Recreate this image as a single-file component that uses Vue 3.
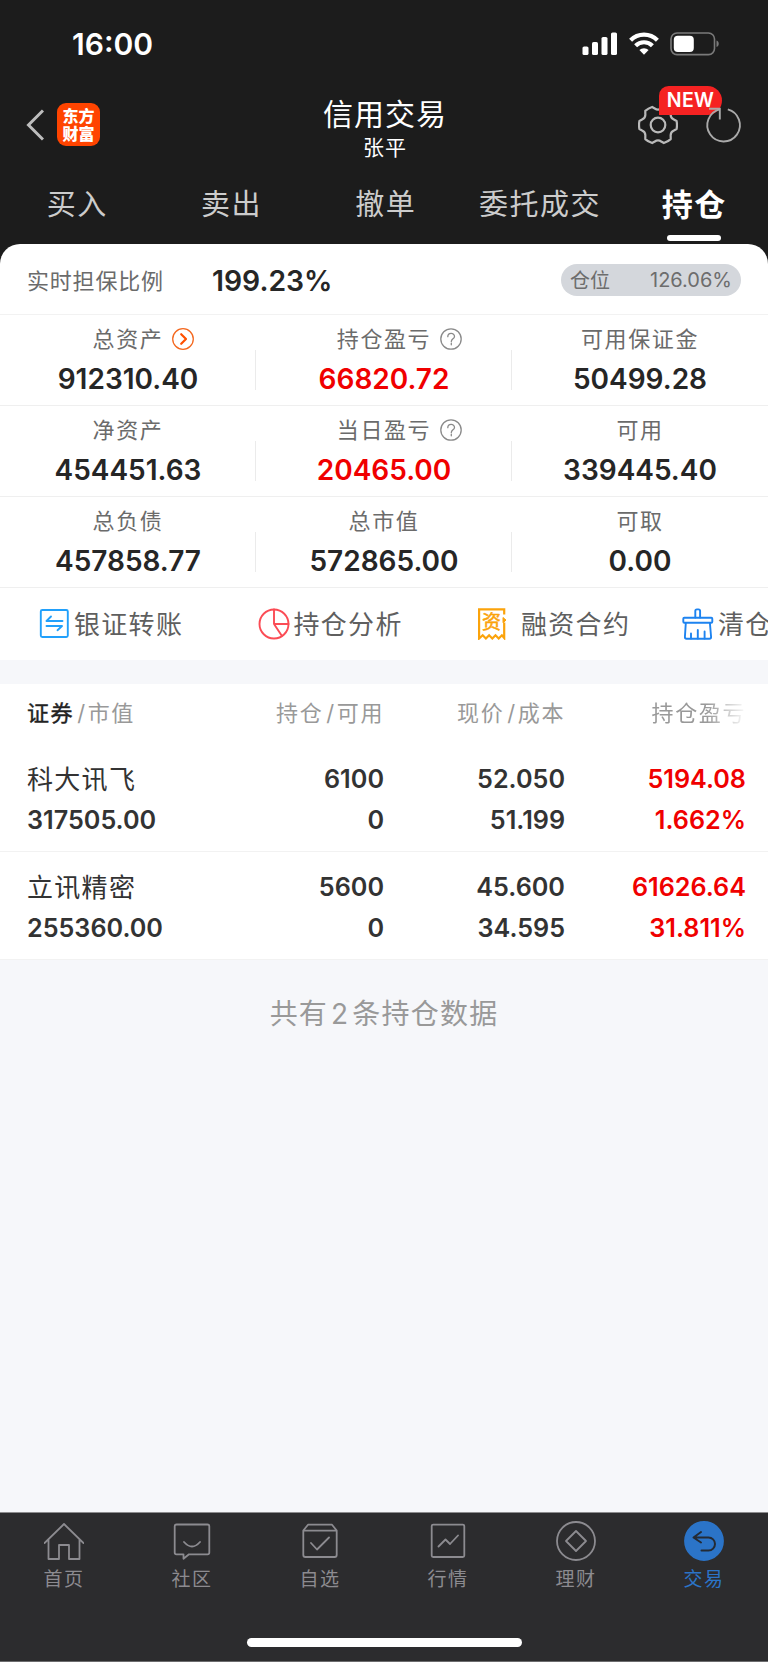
<template>
    <div class="page">
        <header class="header">
            <div class="status-bar">
                <span class="clock">16:00</span>
                <div class="status-icons">
                    <svg class="signal" viewBox="0 0 36 24">
                        <rect x="0.5" y="14.5" width="6" height="8.5" rx="1.6" />
                        <rect x="10" y="10" width="6" height="13" rx="1.6" />
                        <rect x="19.5" y="5" width="6" height="18" rx="1.6" />
                        <rect x="29" y="0.5" width="6" height="22.5" rx="1.6" />
                    </svg>
                    <svg class="wifi" viewBox="0 0 32 24">
                        <path d="M2.6 8.2a19 19 0 0 1 26.8 0" />
                        <path d="M7.6 13.7a12 12 0 0 1 16.8 0" />
                        <path class="dot" d="M16 22.8l-4.6-4.7a6.5 6.5 0 0 1 9.2 0z" />
                    </svg>
                    <svg class="battery" viewBox="0 0 50 24">
                        <rect class="shell" x="1" y="1" width="43.5" height="21.6" rx="6" />
                        <rect x="3.8" y="3.7" width="20" height="16.3" rx="4" fill="#fff" />
                        <path class="cap" d="M46.500 8.500c3 1 3 5.600 0 6.600z" />
                    </svg>
                </div>
            </div>

            <div class="nav-bar">
                <div class="nav-left">
                    <svg class="back" viewBox="0 0 18 34">
                        <path d="M17 2.500L2.500 17l14.500 14.500" />
                    </svg>
                    <div class="logo"><span>东方</span><span>财富</span></div>
                </div>
                <div class="nav-title">
                    <h1>信用交易</h1>
                    <p>张平</p>
                </div>
                <div class="nav-right">
                    <div class="settings">
                        <svg viewBox="-20 -20 40 40">
                            <path :d="gearPath" />
                            <circle r="7.300" />
                        </svg>
                        <span class="new-badge">NEW</span>
                    </div>
                    <svg class="refresh" viewBox="-20 -20 40 40">
                        <path d="M3.800 -15.600A16.300 16.300 0 1 1 -4.200 -15.700" />
                        <path d="M-15 -16.300H-4.200V-5.500" />
                    </svg>
                </div>
            </div>

            <nav class="tabs">
                <div
                    v-for="tab in tabs"
                    :key="tab"
                    class="tab"
                    :class="{ active: tab === activeTab }"
                    @click="activeTab = tab"
                >
                    <span>{{ tab }}</span>
                </div>
            </nav>
        </header>

        <section class="panel">
            <div class="ratio">
                <span class="ratio-label">实时担保比例</span>
                <span class="ratio-value">199.23%</span>
                <div class="position-pill">
                    <span class="pill-name">仓位</span>
                    <span>126.06%</span>
                </div>
            </div>

            <div class="metrics">
                <div v-for="m in metrics" :key="m.label" class="metric">
                    <div class="metric-label">
                        {{ m.label }}
                        <svg v-if="m.icon === 'arrow'" class="mark orange" viewBox="0 0 22 22">
                            <circle cx="11" cy="11" r="10.300" />
                            <path d="M9.200 6.200l4.800 4.800-4.800 4.800" />
                        </svg>
                        <svg v-if="m.icon === 'help'" class="mark" viewBox="0 0 22 22">
                            <circle cx="11" cy="11" r="10.200" />
                            <path d="M7.800 8.700c0-4.400 6.700-4.200 6.700-.3 0 2.400-3.200 2.500-3.200 5.200M11.300 15.200v1.600" />
                        </svg>
                    </div>
                    <div class="metric-value" :class="{ up: m.up }">{{ m.value }}</div>
                </div>
            </div>

            <div class="actions">
                <div class="action">
                    <svg viewBox="0 0 32 32" stroke="#21a0fb">
                        <rect x="2.800" y="2" width="27" height="27" rx="1.500" />
                        <path d="M24.500 13H8.500l4.500-4.500M8.500 18H24l-4.500 4.200" />
                    </svg>
                    <span>银证转账</span>
                </div>
                <div class="action">
                    <svg viewBox="0 0 32 32" stroke="#fb4c55">
                        <circle cx="16" cy="16" r="14.500" />
                        <path d="M16 1.500V16h14.500M16 16l7.800 11.700" />
                    </svg>
                    <span>持仓分析</span>
                </div>
                <div class="action contract">
                    <svg viewBox="0 0 32 32" stroke="#fba30b">
                        <path d="M28.200 6.500V1.300H3.100V30.500l3.600-3.200 3.200 3.200 3.200-3.200 3.200 3.200 3.200-3.200 3.200 3.200 3.200-3.200 2.300 2.700V14.500" />
                        <path d="M27 9.500l3 2.600-3 2.700z" fill="#fba30b" stroke-width="1" />
                        <text x="15.500" y="20.500" text-anchor="middle">资</text>
                    </svg>
                    <span>融资合约</span>
                </div>
                <div class="action">
                    <svg viewBox="0 0 32 32" stroke="#1d83f0">
                        <path d="M13.300 9.500V3q0-1.600 1.600-1.600h1.600q1.600 0 1.600 1.600v6.500" />
                        <rect x="1.300" y="9.800" width="29" height="5" rx="1" />
                        <path d="M3.800 15L2.900 29q0 1.700 1.600 1.700h23q1.600 0 1.600-1.700L27.900 15" />
                        <path d="M9 30.500v-5M15.800 30.500v-8.500M22.600 30.500v-7" />
                    </svg>
                    <span>清仓</span>
                </div>
            </div>
        </section>

        <section class="holdings">
            <div class="grid-row head">
                <div class="left"><b>证券</b><i>/</i>市值</div>
                <div>持仓<i>/</i>可用</div>
                <div>现价<i>/</i>成本</div>
                <div class="fading">持仓盈亏</div>
            </div>
            <div v-for="h in holdings" :key="h.name" class="grid-row stock">
                <div class="left name">{{ h.name }}</div>
                <div>{{ h.amount }}</div>
                <div>{{ h.price }}</div>
                <div class="up">{{ h.profit }}</div>
                <div class="left">{{ h.marketValue }}</div>
                <div>{{ h.available }}</div>
                <div>{{ h.cost }}</div>
                <div class="up">{{ h.rate }}</div>
            </div>
        </section>

        <p class="summary">共有<span>{{ holdings.length }}</span>条持仓数据</p>

        <footer class="tab-bar">
            <div class="tab-items">
                <div v-for="item in navItems" :key="item.label" class="tab-item" :class="{ current: item.current }">
                    <svg viewBox="-20 -20 40 40">
                        <circle v-if="item.round" r="19" />
                        <path :d="item.path" />
                    </svg>
                    <span>{{ item.label }}</span>
                </div>
            </div>
            <div class="home-indicator"></div>
        </footer>
    </div>
</template>

<script setup>
import { ref } from 'vue'

const tabs = ['买入', '卖出', '撤单', '委托成交', '持仓']
const activeTab = ref('持仓')

const metrics = [
    { label: '总资产', value: '912310.40', icon: 'arrow' },
    { label: '持仓盈亏', value: '66820.72', icon: 'help', up: true },
    { label: '可用保证金', value: '50499.28' },
    { label: '净资产', value: '454451.63' },
    { label: '当日盈亏', value: '20465.00', icon: 'help', up: true },
    { label: '可用', value: '339445.40' },
    { label: '总负债', value: '457858.77' },
    { label: '总市值', value: '572865.00' },
    { label: '可取', value: '0.00' }
]

const holdings = [
    {
        name: '科大讯飞',
        marketValue: '317505.00',
        amount: '6100',
        available: '0',
        price: '52.050',
        cost: '51.199',
        profit: '5194.08',
        rate: '1.662%'
    },
    {
        name: '立讯精密',
        marketValue: '255360.00',
        amount: '5600',
        available: '0',
        price: '45.600',
        cost: '34.595',
        profit: '61626.64',
        rate: '31.811%'
    }
]

const navItems = [
    { label: '首页', path: 'M-19.500 2L0 -17L19.500 2M-15.500 -1.500V18H-5V4H5V18H15.500V-1.500' },
    { label: '社区', path: 'M-15.500 -16.500H15.500Q17.300 -16.500 17.300 -14.700V11.500Q17.300 13.300 15.500 13.300H-3L-8.500 17.800V13.300H-15.500Q-17.300 13.300 -17.300 11.500V-14.700Q-17.300 -16.500 -15.500 -16.500ZM-8 1Q0 10 8 1' },
    { label: '自选', path: 'M-16.700 -10.500L-12 -16.300H12L16.700 -10.500V14Q16.700 16 14.700 16H-14.700Q-16.700 16 -16.700 14ZM-16 -10.300H16M-9 2L-3 8.500L9 -3.500' },
    { label: '行情', path: 'M-14.800 -16.300H14.800Q16.300 -16.300 16.300 -14.800V14.500Q16.300 16 14.800 16H-14.800Q-16.300 16 -16.300 14.500V-14.800Q-16.300 -16.300 -14.800 -16.300ZM-9.500 5.500L-2.500 -1.500L2 3L10 -5.500' },
    { label: '理财', round: true, path: 'M0 -10L10 0L0 10L-10 0Z' },
    { label: '交易', round: true, current: true, path: 'M-3 -9L-10.500 -3.500L-3 1.500M-10 -3.500H4.500A6.500 6.500 0 0 1 4.500 9.500H-2.500' }
]

// six teeth, 60 degrees apart, joined by rounded notches
const polar = (deg, r) => {
    const a = (deg * Math.PI) / 180
    return `${(r * Math.cos(a)).toFixed(2)} ${(r * Math.sin(a)).toFixed(2)}`
}
const gearPath =
    `M${polar(-12, 19)}` +
    [0, 60, 120, 180, 240, 300]
        .map(d => `Q${polar(d, 19.4)} ${polar(d + 12, 19)}L${polar(d + 19, 16.8)}Q${polar(d + 30, 14.2)} ${polar(d + 41, 16.8)}L${polar(d + 48, 19)}`)
        .join('') +
    'Z'
</script>

<style>
body {
    margin: 0;
    background: #f6f7fa;
}
</style>

<style scoped>
.page {
    display: flex;
    flex-direction: column;
    width: 768px;
    height: 1662px;
    overflow: hidden;
    background: #f6f7fa;
    font-family: Inter, 'Noto Sans CJK SC', sans-serif;
    color: #262626;
}

svg {
    display: block;
    flex: none;
    fill: none;
    stroke-linejoin: round;
    stroke-linecap: round;
}

.header {
    height: 264px;
    margin-bottom: -20px;
    flex: none;
    background: #1c1c1c;
    color: #fff;
}

.status-bar {
    display: flex;
    align-items: center;
    justify-content: space-between;
    height: 87px;
    padding: 0 48px 0 72px;
}

.clock {
    font-size: 30px;
    font-weight: 600;
}

.status-icons {
    display: flex;
    align-items: center;
}

.signal {
    width: 36px;
    height: 24px;
    margin-right: 10px;
    fill: #fff;
}

.wifi {
    width: 32px;
    height: 24px;
    margin-right: 10px;
    stroke: #fff;
    stroke-width: 4.200;
    stroke-linecap: butt;
}

.wifi .dot {
    fill: #fff;
    stroke: none;
}

.battery {
    width: 50px;
    height: 24px;
}

.battery .shell {
    stroke: #7a7a7a;
    stroke-width: 1.600;
}

.battery .cap {
    fill: #7a7a7a;
}

.nav-bar {
    display: grid;
    grid-template-columns: 1fr auto 1fr;
    align-items: center;
    height: 74px;
    padding: 0 24px 0 25px;
}

.nav-left,
.nav-right {
    display: flex;
    align-items: center;
}

.nav-right {
    justify-content: flex-end;
    gap: 26px;
}

.back {
    width: 18px;
    height: 34px;
    margin: 0 13px 0 1px;
    stroke: #bdbdbd;
    stroke-width: 3;
    stroke-linecap: butt;
    stroke-linejoin: miter;
}

.logo {
    display: flex;
    flex-direction: column;
    align-items: center;
    justify-content: center;
    width: 43px;
    height: 43px;
    border-radius: 9px;
    background: #ff4400;
    font-size: 16px;
    font-weight: 900;
    line-height: 18px;
}

.nav-title {
    padding-left: 1px;
    text-align: center;
    white-space: nowrap;
}

.nav-title h1,
.nav-title p {
    margin: 0;
    font-weight: 400;
}

.nav-title h1 {
    margin-top: 7px;
    font-size: 30px;
    line-height: 40px;
    letter-spacing: 1px;
}

.nav-title p {
    font-size: 21px;
    line-height: 28px;
    letter-spacing: 1px;
}

.settings {
    position: relative;
    width: 40px;
    height: 40px;
}

.settings svg {
    stroke: #b9b9b9;
    stroke-width: 2.200;
}

.new-badge {
    position: absolute;
    left: 21px;
    top: -19px;
    width: 63px;
    height: 29px;
    border-radius: 10px 15px 15px 0;
    background: #f52222;
    font-size: 19.500px;
    font-weight: 600;
    line-height: 29px;
    letter-spacing: 0.300px;
    text-align: center;
}

.refresh {
    position: relative;
    width: 40px;
    height: 40px;
    stroke: #aaa;
    stroke-width: 1.900;
    stroke-linecap: butt;
    stroke-linejoin: miter;
}

.tabs {
    display: flex;
}

.tab {
    display: flex;
    flex: 0 0 154.300px;
    flex-direction: column;
    align-items: center;
    padding-top: 24px;
    font-size: 29px;
    line-height: 40px;
    letter-spacing: 1.500px;
    white-space: nowrap;
    color: #ccc;
}

.tab.active {
    font-size: 31px;
    font-weight: 700;
    color: #fff;
}

.tab.active::after {
    content: '';
    width: 54px;
    height: 6px;
    margin-top: 10px;
    border-radius: 3px;
    background: #fff;
}

.panel {
    position: relative;
    flex: none;
    border-radius: 20px 20px 0 0;
    background: #fff;
    overflow: hidden;
}

.ratio {
    display: flex;
    align-items: center;
    height: 71px;
    padding: 2px 27px 0;
    box-sizing: border-box;
    border-bottom: 1px solid #f2f2f2;
}

.ratio-label {
    width: 185px;
    padding-bottom: 2px;
    font-size: 22px;
    letter-spacing: 0.800px;
    color: #6b6b6b;
}

.ratio-value {
    padding-top: 2px;
    font-size: 28.300px;
    font-weight: 600;
}

.position-pill {
    display: flex;
    align-items: center;
    justify-content: space-between;
    width: 180px;
    height: 32px;
    margin-left: auto;
    padding: 0 9px;
    box-sizing: border-box;
    border-radius: 16px;
    background: #d4d7dc;
    font-size: 20px;
    color: #6d6d6d;
}

.pill-name {
    padding-bottom: 2px;
}

.metrics {
    display: grid;
    grid-template-columns: repeat(3, 1fr);
}

.metric {
    position: relative;
    height: 91px;
    padding-top: 8px;
    box-sizing: border-box;
    border-bottom: 1px solid #efefef;
    text-align: center;
}

.metric:not(:nth-child(3n))::after {
    content: '';
    position: absolute;
    right: 0;
    top: 35px;
    width: 1px;
    height: 40px;
    background: #ebebeb;
}

.metric-label {
    position: relative;
    width: fit-content;
    margin: 0 auto;
    font-size: 22px;
    line-height: 32px;
    letter-spacing: 1.600px;
    color: #6b6b6b;
}

.metric-value {
    margin-top: 4px;
    font-size: 28px;
    font-weight: 600;
    line-height: 40px;
}

.up,
.stock .up {
    color: #f00000;
}

.mark {
    position: absolute;
    left: 100%;
    top: 5px;
    width: 22px;
    height: 22px;
    margin-left: 9px;
    stroke: #8a8a8a;
    stroke-width: 1.300;
}

.mark.orange {
    stroke: #f4681f;
}

.mark.orange path {
    stroke: #ff5000;
    stroke-width: 2.200;
}

.actions {
    display: flex;
    align-items: center;
    height: 72px;
    padding-left: 38px;
}

.action {
    display: flex;
    flex: none;
    align-items: center;
    width: 219.500px;
    font-size: 26px;
    letter-spacing: 1.300px;
    white-space: nowrap;
    color: #5f5f5f;
}

.action span {
    padding-bottom: 4px;
}

.action svg {
    width: 32px;
    height: 32px;
    margin-right: 4px;
    stroke-width: 1.900;
}

.action.contract {
    width: 205px;
}

.action.contract svg {
    margin: 0 13px 0 -1px;
    stroke-width: 2.200;
    stroke-linejoin: miter;
    stroke-linecap: butt;
}

.action.contract text {
    font-size: 19px;
    letter-spacing: 0;
    fill: #fba30b;
    stroke-width: 0.500;
}

.holdings {
    flex: none;
    margin-top: 24px;
    background: #fff;
}

.grid-row {
    display: grid;
    grid-template-columns: 1fr 180px 181px 181px;
    padding: 0 22px 0 27px;
    text-align: right;
    white-space: nowrap;
}

.left {
    text-align: left;
}

.head {
    height: 60px;
    font-size: 22px;
    line-height: 58px;
    letter-spacing: 1.600px;
    color: #999;
}

.head b {
    font-weight: 400;
    color: #222;
    -webkit-text-stroke: 0.400px #222;
}

.head i {
    margin: 0 1px 0 3px;
    font-style: normal;
}

.head .fading {
    mask-image: linear-gradient(to right, #000 78%, transparent 101%);
}

.stock {
    height: 108px;
    padding-top: 15px;
    box-sizing: border-box;
    grid-auto-rows: 41px;
    border-bottom: 1px solid #f2f2f2;
    font-size: 25.200px;
    font-weight: 600;
    line-height: 41px;
    color: #333;
}

.stock .name {
    font-size: 26px;
    font-weight: 400;
    letter-spacing: 1.300px;
}

.summary {
    margin: 34px 0 0;
    font-size: 28px;
    line-height: 40px;
    letter-spacing: 1.200px;
    text-align: center;
    color: #999;
}

.summary span {
    margin: 0 3px;
}

.tab-bar {
    display: flex;
    flex-direction: column;
    align-items: center;
    height: 150px;
    margin-top: auto;
    box-sizing: border-box;
    border-top: 1px solid #8c8c8e;
    border-bottom: 1px solid #6c6c6e;
    background: #2c2c2e;
}

.tab-items {
    display: flex;
    width: 100%;
    padding-top: 8px;
}

.tab-item {
    display: flex;
    flex: 1;
    flex-direction: column;
    align-items: center;
    font-size: 19px;
    line-height: 28px;
    letter-spacing: 1.400px;
    color: #8c8b90;
}

.tab-item svg {
    width: 40px;
    height: 40px;
    margin-bottom: 5px;
    stroke: #8c8b90;
    stroke-width: 1.800;
}

.tab-item.current {
    color: #2b74c8;
}

.tab-item.current circle {
    fill: #2b74c8;
    stroke: #2b74c8;
}

.tab-item.current path {
    stroke: #242b35;
    stroke-width: 2;
}

.home-indicator {
    width: 275px;
    height: 9px;
    margin-top: 44px;
    border-radius: 5px;
    background: #fff;
}
</style>
